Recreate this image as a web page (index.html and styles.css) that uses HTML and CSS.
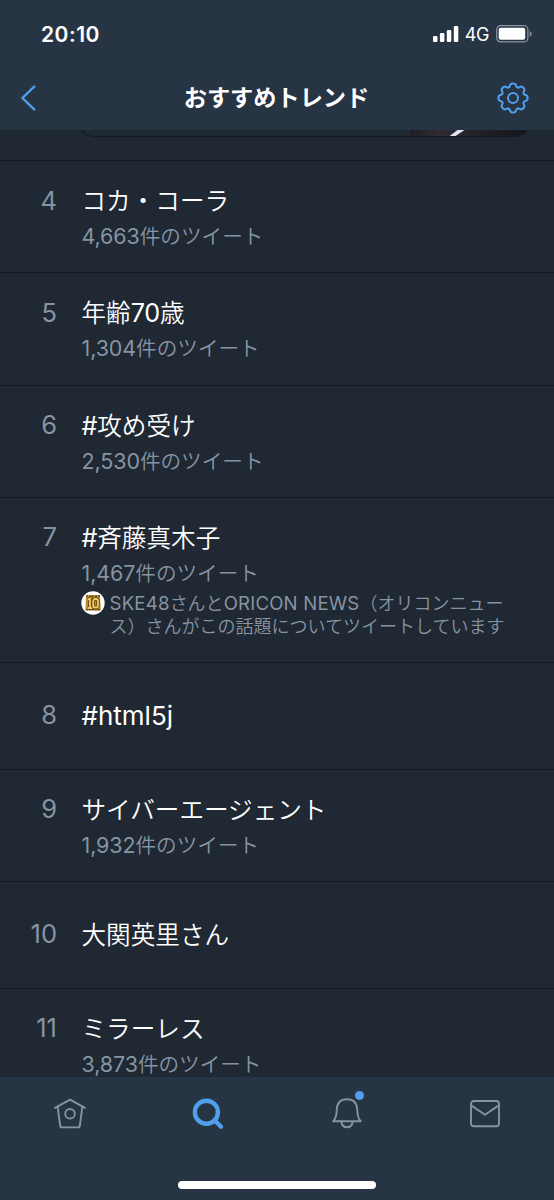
FILE: index.html
```html
<!DOCTYPE html>
<html lang="ja">
<head>
<meta charset="utf-8">
<title>おすすめトレンド</title>
<link rel="stylesheet" href="styles.css">
</head>
<body>
<div class="app">
  <header class="header">
    <div class="status">
      <span class="clock">20:10</span>
      <div class="status-right">
        <svg class="signal" width="26" height="16" viewBox="0 0 26 16" fill="#fff"><rect x="0" y="10" width="4.5" height="6" rx="1.3"/><rect x="6.9" y="7" width="4.5" height="9" rx="1.3"/><rect x="13.8" y="4" width="4.5" height="12" rx="1.3"/><rect x="20.8" y="0" width="4.5" height="16" rx="1.3"/></svg>
        <span class="network">4G</span>
        <svg class="battery" width="36" height="18" viewBox="0 0 36 18"><rect x=".7" y=".7" width="31.2" height="16.2" rx="4" fill="none" stroke="#8b95a2" stroke-width="1.2"/><rect x="2.7" y="2.8" width="26.5" height="12" rx="2" fill="#fff"/><path d="M33.7 6v5.8q2-.8 2-2.9t-2-2.9z" fill="#8b95a2"/></svg>
      </div>
    </div>
    <div class="navbar">
      <svg class="back" width="16" height="26" viewBox="0 0 16 26" fill="none" stroke="#4f9fec" stroke-width="2.4" stroke-linecap="round" stroke-linejoin="round"><path d="M14.2 1.6 2.4 13l11.8 11.4"/></svg>
      <h1 class="heading">おすすめトレンド</h1>
      <svg class="gear" width="32" height="32" viewBox="-16 -16 32 32" fill="none" stroke="#4f9fec" stroke-width="2" stroke-linecap="round">
        <defs><path id="tooth" d="M-4.4-10.6C-3.4-11-3.1-11.6-3-12.4C-2.7-15.3 2.7-15.3 3-12.4C3.1-11.6 3.4-11 4.4-10.6"/></defs>
        <use href="#tooth"/><use href="#tooth" transform="rotate(45)"/><use href="#tooth" transform="rotate(90)"/><use href="#tooth" transform="rotate(135)"/><use href="#tooth" transform="rotate(180)"/><use href="#tooth" transform="rotate(225)"/><use href="#tooth" transform="rotate(270)"/><use href="#tooth" transform="rotate(315)"/>
        <circle r="5"/>
      </svg>
    </div>
  </header>
  <main class="trends">
    <div class="previous"><div class="card"><svg class="photo" width="115" height="7" viewBox="0 0 115 7"><defs><linearGradient id="shade"><stop offset="0" stop-color="#211f26"/><stop offset=".25" stop-color="#302c31"/><stop offset=".6" stop-color="#211f27"/><stop offset="1" stop-color="#15171d"/></linearGradient></defs><path fill="url(#shade)" d="M0 0h115v7H0z"/><path fill="#dce5f1" d="M46 0h7L44 6h-6z"/></svg></div></div>
    <section class="row"><span class="rank">4</span><div><h2 class="title">コカ・コーラ</h2><p class="count"><span class="num">4,663</span>件のツイート</p></div></section>
    <section class="row"><span class="rank">5</span><div><h2 class="title">年齢<span class="lat">70</span>歳</h2><p class="count"><span class="num">1,304</span>件のツイート</p></div></section>
    <section class="row"><span class="rank">6</span><div><h2 class="title"><span class="lat">#</span>攻め受け</h2><p class="count"><span class="num">2,530</span>件のツイート</p></div></section>
    <section class="row noted"><span class="rank">7</span><div><h2 class="title"><span class="lat">#</span>斉藤真木子</h2><p class="count"><span class="num">1,467</span>件のツイート</p>
      <div class="note"><svg class="avatar" width="24" height="24" viewBox="0 0 24 24"><circle cx="12" cy="12" r="11.7" fill="#fff"/><path d="M5 4.5 19 4l.7 15.5L4.5 19z" fill="#b98a32"/><path d="M5 5h14M4.8 18.8h14.5" stroke="#654b20" stroke-width="1.4" stroke-dasharray="2 1"/><path d="M7 8.5l2-1V17M7 17h4" fill="none" stroke="#604315" stroke-width="3.4"/><rect x="12.2" y="8" width="4.8" height="8.5" rx="2" fill="none" stroke="#604315" stroke-width="3.4"/><path d="M7 8.5l2-1V17M7 17h4" fill="none" stroke="#f3ca61" stroke-width="1.8"/><rect x="12.2" y="8" width="4.8" height="8.5" rx="2" fill="none" stroke="#f3ca61" stroke-width="1.8"/></svg><p class="note-text"><span class="note-lat">SKE48</span>さんと<span class="note-lat">ORICON NEWS</span>（オリコンニュー<br>ス）さんがこの話題についてツイートしています</p></div></div></section>
    <section class="row single"><span class="rank">8</span><div><h2 class="title"><span class="lat tag">#html5j</span></h2></div></section>
    <section class="row"><span class="rank">9</span><div><h2 class="title">サイバーエージェント</h2><p class="count"><span class="num">1,932</span>件のツイート</p></div></section>
    <section class="row single"><span class="rank">10</span><div><h2 class="title">大関英里さん</h2></div></section>
    <section class="row"><span class="rank">11</span><div><h2 class="title">ミラーレス</h2><p class="count"><span class="num">3,873</span>件のツイート</p></div></section>
  </main>
  <footer class="footer">
    <nav class="tabs">
      <div class="tab"><svg width="34" height="34" viewBox="0 0 34 34" fill="none" stroke="#8593a3" stroke-width="1.9" stroke-linecap="round" stroke-linejoin="round"><path d="M2 10.8 17 2.7l15 8.1M4.7 10l2.4 18.4q.2 2 2.2 2h15.4q2 0 2.2-2L29.3 10"/><circle cx="17" cy="16.8" r="4.8"/></svg></div>
      <div class="tab"><svg width="34" height="34" viewBox="0 0 34 34" fill="none" stroke="#4f9fec" stroke-width="4.4" stroke-linecap="round"><circle cx="15.4" cy="15.2" r="11.5"/><path d="m24.5 24.2 5.5 5.6"/></svg></div>
      <div class="tab"><svg width="34" height="34" viewBox="0 0 34 34" fill="none" stroke="#8593a3" stroke-width="1.9" stroke-linecap="round" stroke-linejoin="round"><path d="M3.2 24.3q3.3-3.2 3.6-11.6C7.1 5.9 10.8 2.3 17 2.3s9.9 3.6 10.2 10.4q.3 8.4 3.6 11.6zM11.4 25c.5 3.4 2.4 5.2 5.6 5.2s5.1-1.8 5.6-5.2"/></svg><span class="dot"></span></div>
      <div class="tab"><svg width="34" height="34" viewBox="0 0 34 34" fill="none" stroke="#8593a3" stroke-width="1.9" stroke-linecap="round" stroke-linejoin="round"><rect x="3" y="4" width="28" height="25.3" rx="2.8"/><path d="m3.6 8.6 13.4 9.2 13.4-9.2"/></svg></div>
    </nav>
    <div class="home-indicator"></div>
  </footer>
</div>
</body>
</html>
```
FILE: styles.css
```css
* { box-sizing: border-box; }
body { margin: 0; background: #1f2833; font-family: Inter, "Noto Sans CJK JP", sans-serif; color: #fff; }
.app { width: 554px; height: 1200px; display: flex; flex-direction: column; overflow: hidden; }
.header { height: 130px; flex: none; background: #273444; }
.status { height: 65px; padding: 3px 22px 0 41px; display: flex; align-items: center; justify-content: space-between; }
.clock { font-size: 21px; font-weight: 600; letter-spacing: .5px; }
.status-right { display: flex; align-items: center; }
.network { font-size: 18px; margin: 0 7px 0 6px; letter-spacing: -.4px; }
.navbar { height: 65px; padding: 0 25px 0 20px; display: grid; grid-template-columns: 32px 1fr 32px; align-items: center; }
.heading { margin: 0; padding: 0 0 3px 4px; font: 700 23.2px/36px "Noto Sans CJK JP", sans-serif; text-align: center; white-space: nowrap; }
.trends { flex: 1; min-height: 0; overflow: hidden; }
.previous { height: 31px; padding: 0 27px 0 82px; border-bottom: 1px solid #111923; }
.card { height: 7px; border: 1px solid #111923; border-top: 0; border-radius: 0 0 14px 14px / 0 0 7px 7px; overflow: hidden; display: flex; justify-content: flex-end; }
.photo { border-left: 1px solid #111923; }
.row { height: 112.3px; padding-top: 22px; border-bottom: 1px solid #111923; display: grid; grid-template-columns: 57px 1fr; column-gap: 24.5px; align-items: start; }
.row.noted { height: 165px; }
.row.single { height: 106.8px; padding-top: 35px; }
.rank { margin-top: -.5px; text-align: right; color: #8794a2; font-size: 25.5px; line-height: 36px; font-weight: 400; }
.title { margin: -2px 0 2px; height: 36px; font: 350 24.6px/36px "Noto Sans CJK JP", sans-serif; white-space: nowrap; }
.lat { font-family: Inter, sans-serif; font-size: 25.2px; font-weight: 400; letter-spacing: -.2px; }
.lat.tag { font-size: 26px; letter-spacing: 0; }
.count { margin: -1px 0 1px; height: 34px; color: #8794a2; font: 350 20.6px/34px "Noto Sans CJK JP", sans-serif; white-space: nowrap; }
.num { font-family: Inter, sans-serif; font-size: 21.5px; font-weight: 400; letter-spacing: -.1px; }
.note { display: flex; gap: 5px; margin-top: 3px; }
.avatar { flex: none; margin-left: -1px; margin-top: -1px; }
.note-text { margin: -1px 0 0; color: #8794a2; font: 350 18px/23px "Noto Sans CJK JP", sans-serif; white-space: nowrap; }
.note-lat { font-family: Inter, sans-serif; font-size: 18.6px; font-weight: 400; line-height: 1; letter-spacing: .2px; }
.footer { height: 123px; flex: none; background: #273444; display: flex; flex-direction: column; align-items: center; justify-content: space-between; padding: 20px 0 11px; }
.tabs { width: 100%; padding-left: 1px; display: grid; grid-template-columns: repeat(4, 1fr); }
.tab { position: relative; display: flex; justify-content: center; }
.dot { position: absolute; width: 9px; height: 9px; left: 77px; top: -6px; border-radius: 50%; background: #4f9fec; }
.home-indicator { width: 198px; height: 8px; border-radius: 4px; background: #fff; }
```
